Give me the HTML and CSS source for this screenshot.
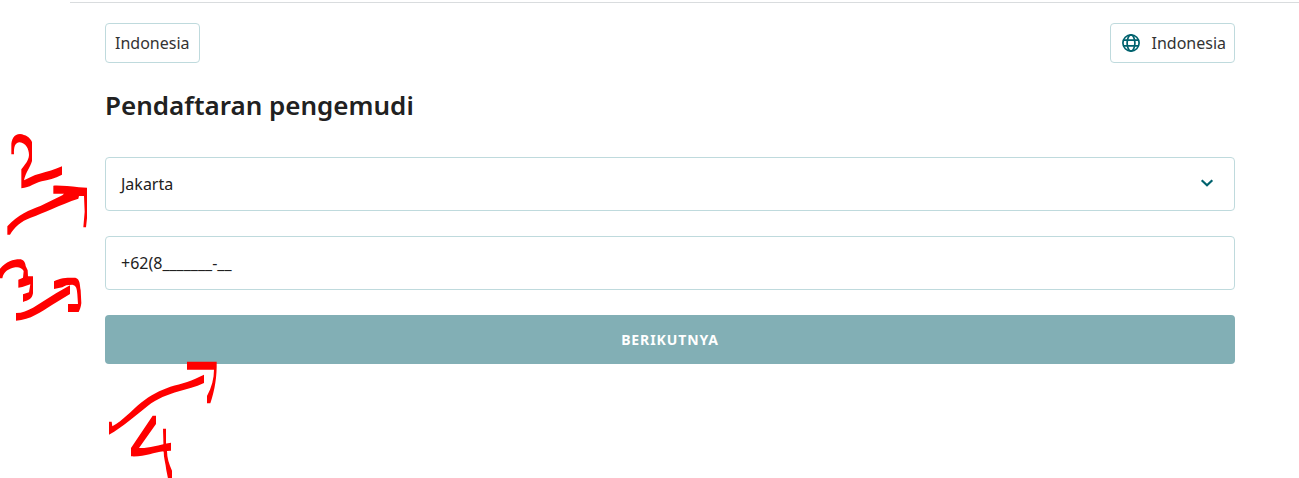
FILE: index.html
```html
<!DOCTYPE html>
<html lang="id">
<head>
    <meta charset="utf-8">
    <meta name="viewport" content="width=device-width, initial-scale=1">
    <title>Pendaftaran pengemudi</title>
    <link rel="stylesheet" href="styles.css">
</head>
<body>
    <main class="page">
        <div class="topbar">
            <button class="chip" type="button">Indonesia</button>
            <button class="chip chip-lang" type="button">
                <svg class="globe" viewBox="0 0 20 20">
                    <circle cx="10" cy="10" r="8.1"/>
                    <ellipse cx="10" cy="10" rx="3.9" ry="8.1"/>
                    <path d="M2.6 7.2h14.8M2.6 12.8h14.8"/>
                </svg>
                <span>Indonesia</span>
            </button>
        </div>

        <h1>Pendaftaran pengemudi</h1>

        <form class="signup">
            <div class="field">
                <span>Jakarta</span>
                <svg class="chevron" viewBox="0 0 14 10">
                    <path d="M1.7 2.2L7 7.3l5.3-5.1"/>
                </svg>
            </div>
            <div class="field">
                <span>+62(8_______-__</span>
            </div>
            <button class="submit" type="button">BERIKUTNYA</button>
        </form>
    </main>

    <!-- handwritten step marks over the form -->
    <svg class="marks" viewBox="0 0 1299 478">
        <g transform="translate(0 125) scale(.33333)">
            <path d="M34 88V62C34 43 42 27 60 27C77 29 90 37 96 51V108C91 127 77 142 72 166C88 158 99 151 119 146C143 140 163 134 186 124V149C164 160 145 165 125 169C103 174 91 188 64 190V133C74 119 86 108 87 90C87 73 78 54 59 52C45 53 41 65 42 88Z"/>
            <path d="M160 182C184 181 207 184 237 187L261 188V280L258 307H250L254 260L252 213H237L235 221C180 239 129 265 92 278C63 288 43 307 30 329H22V304C54 269 89 255 121 243L187 211L192 206H160Z"/>
        </g>
        <g transform="translate(0 245) scale(.33333)">
            <path d="M0 71C18 50 40 43 59 43C69 43 76 51 77 63L83 76L84 94H99V145C96 163 84 166 69 171V148L87 142L91 118L67 126L55 128V104L69 98L71 78C65 68 56 65 46 67C27 71 11 79 7 100H0Z"/>
            <path d="M162 109C182 97 205 98 226 98C241 103 239 118 242 136L244 174C243 186 239 195 236 201H204V177H234L232 148C231 132 229 121 217 119C202 119 194 121 187 127L162 132ZM48 204C67 204 82 197 99 188L168 145L210 121V147L157 179C122 201 92 224 48 227Z"/>
        </g>
        <g transform="translate(95 350) scale(.33333)">
            <path d="M276 35H365C366 80 360 117 346 160H336V138C350 112 357 85 357 59H276Z"/>
            <path d="M42 215H50L52 229C83 212 108 183 137 159C167 134 196 121 226 110C261 101 292 92 327 74V99C301 112 277 116 252 124C217 134 187 146 158 168C121 197 84 231 42 254Z"/>
            <path d="M173 197H183V222L132 294C158 296 187 285 228 278V302L216 303C216 323 222 343 231 362V390H220L214 361C212 340 206 325 206 304C175 307 150 321 108 319V294Z"/>
            <path d="M204 236H213V306H206Z"/>
        </g>
    </svg>
</body>
</html>
```
FILE: styles.css
```css
* {
    box-sizing: border-box;
}
body {
    height: 478px;
    margin: 0;
    overflow: hidden;
    background-color: #fff;
    color: #212121;
    font-family: "Noto Sans", sans-serif;
    font-size: 16px;
}
.page {
    margin-top: 2px;
    margin-left: 70px;
    padding: 20px 64px 0 35px;
    border-top: 1px solid #d9dcde;
}
.topbar {
    display: flex;
    justify-content: space-between;
}
.chip {
    display: flex;
    align-items: center;
    height: 40px;
    padding: 0 9px;
    border: 1px solid #bfdadd;
    border-radius: 4px;
    background-color: #fff;
    color: #333;
    font: inherit;
    white-space: nowrap;
}
.chip-lang {
    padding: 0 8px 0 10px;
    gap: 10px;
}
.globe {
    width: 20px;
    height: 20px;
    fill: none;
    stroke: #00626e;
    stroke-width: 1.7;
}
h1 {
    margin: 24px 0 34px;
    font-size: 26px;
    font-weight: 600;
    line-height: 36px;
}
.signup {
    display: flex;
    flex-direction: column;
    gap: 25px;
}
.field {
    display: flex;
    align-items: center;
    justify-content: space-between;
    height: 54px;
    padding: 0 20px 0 15px;
    border: 1px solid #bfdadd;
    border-radius: 4px;
}
.chevron {
    width: 14px;
    height: 10px;
    margin-bottom: 2px;
    fill: none;
    stroke: #00626e;
    stroke-width: 2.2;
}
.submit {
    height: 49px;
    border: none;
    border-radius: 4px;
    background-color: #82afb5;
    color: #fff;
    font: inherit;
    font-size: 14px;
    font-weight: 700;
    letter-spacing: 0.9px;
}
.marks {
    position: absolute;
    top: 0;
    left: 0;
    width: 1299px;
    height: 478px;
    fill: #f00;
    pointer-events: none;
}
```
